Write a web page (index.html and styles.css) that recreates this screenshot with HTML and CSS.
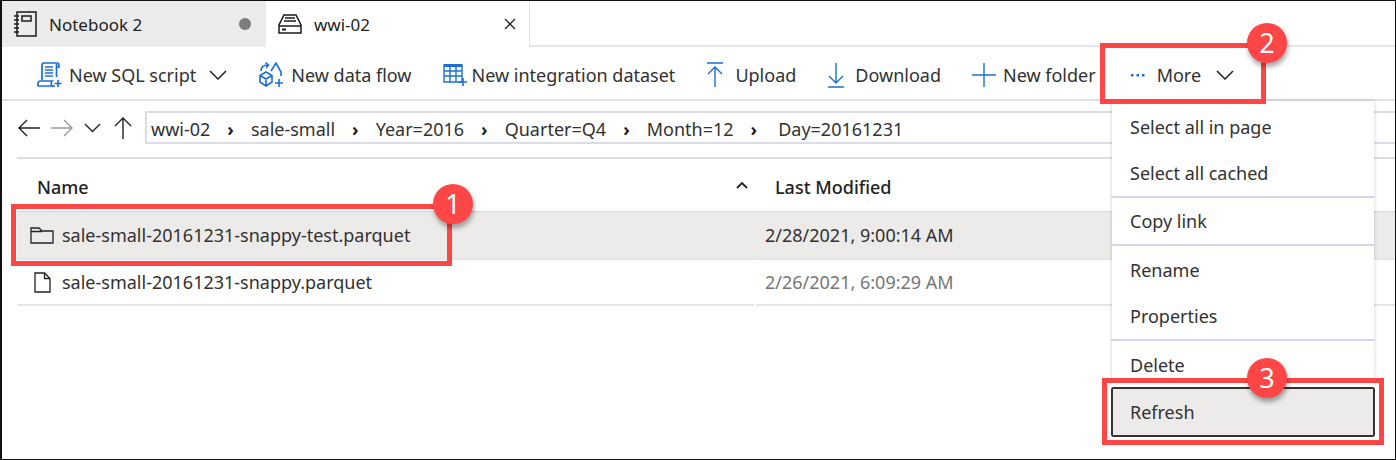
FILE: index.html
```html
<!DOCTYPE html>
<html lang="en">
<head>
  <meta charset="UTF-8" />
  <title>wwi-02</title>
  <link rel="stylesheet" href="styles.css">
</head>
<body>
  <div class="frame">
    <div class="tabs">
      <div class="tab tab-off">
        <svg class="tab-icon" width="24" height="26" viewBox="0 0 24 26" fill="none" stroke="#1b1b1b" stroke-width="1.5">
          <rect x="4" y="1" width="19" height="24"/>
          <rect x="9" y="5" width="9" height="5"/>
          <path d="M1 5h5M1 9h5M1 13h5M1 17h5M1 21h5"/>
        </svg>
        <span class="tab-name">Notebook 2</span>
        <span class="dirty-dot"></span>
      </div>
      <div class="tab tab-on">
        <svg class="tab-icon" width="24" height="20" viewBox="0 0 24 20" fill="none" stroke="#1b1b1b" stroke-width="1.5">
          <path d="M6 1h12l5 10v8H1v-8z"/>
          <path d="M1 12h22M7 4h10M6 7h12"/>
          <path d="M4 15.5h4" stroke-width="2"/>
        </svg>
        <span class="tab-name">wwi-02</span>
        <svg class="tab-close" width="12" height="12" viewBox="0 0 12 12" stroke="#222" stroke-width="1.3"><path d="M1 1l10 10M11 1L1 11"/></svg>
      </div>
      <div class="tab-rest"></div>
    </div>

    <div class="toolbar">
      <div class="tool tool-sql">
        <svg width="26" height="26" viewBox="0 0 26 26" fill="none" stroke="#1a6fd6" stroke-width="1.7">
          <path d="M5 18V2.5C5 1.500 5.800 1 6.500 1H20c1.200 0 2 .8 2 2v2h-2.500"/>
          <path d="M19.500 2v13"/>
          <path d="M8 5h8M8 8h8M8 11h8M8 14h8"/>
          <path d="M1 24c-.5-3 .5-5 2-5h12c-1 1-1 4 0 5z"/>
          <path d="M15 24h3M21 18v7M17.500 21.500h7"/>
        </svg>
        <span>New SQL script</span>
        <svg class="chev" width="18" height="10" viewBox="0 0 18 10" fill="none" stroke="#222" stroke-width="1.5"><path d="M1 1l8 8 8-8"/></svg>
      </div>
      <div class="tool tool-flow">
        <svg width="26" height="26" viewBox="0 0 26 26" fill="none" stroke="#1a6fd6" stroke-width="1.600">
          <path d="M8 10l6 3.500v6.500l-6 4-6-4v-6.500zM2 13.500l6 3.500 6-3.500M8 17v7"/>
          <path d="M3 9c0-4 3-6 7-6M7.500 .5L10.500 3 8 6"/>
          <path d="M13 9l5-8 5 9v4"/>
          <path d="M17 21h8M21 17v8"/>
        </svg>
        <span>New data flow</span>
      </div>
      <div class="tool tool-set">
        <svg width="24" height="24" viewBox="0 0 24 24" fill="none" stroke="#1a6fd6" stroke-width="1.400">
          <path d="M1 2h18v17H1z"/>
          <path d="M1 2.500h18" stroke-width="3"/>
          <path d="M1 8h18M1 13h18M7 3v16M13 3v16"/>
          <path d="M20 15v8M16 19h8" stroke-width="1.600"/>
        </svg>
        <span>New integration dataset</span>
      </div>
      <div class="tool tool-up">
        <svg width="18" height="26" viewBox="0 0 18 26" fill="none" stroke="#1a6fd6" stroke-width="1.400"><path d="M1 1h16M9 25V5M2 12l7-7 7 7"/></svg>
        <span>Upload</span>
      </div>
      <div class="tool tool-down">
        <svg width="18" height="26" viewBox="0 0 18 26" fill="none" stroke="#1a6fd6" stroke-width="1.400"><path d="M1 25h16M9 1v20M2 14l7 7 7-7"/></svg>
        <span>Download</span>
      </div>
      <div class="tool tool-new">
        <svg width="24" height="24" viewBox="0 0 24 24" fill="none" stroke="#1a6fd6" stroke-width="1.400"><path d="M0 12h24M12 0v24"/></svg>
        <span>New folder</span>
      </div>
      <div class="tool tool-more">
        <svg width="14" height="4" viewBox="0 0 14 4" fill="#1a6fd6"><rect y="1" width="2.500" height="2.500"/><rect x="5.500" y="1" width="2.500" height="2.500"/><rect x="11" y="1" width="2.500" height="2.500"/></svg>
        <span>More</span>
        <svg class="chev" width="18" height="10" viewBox="0 0 18 10" fill="none" stroke="#222" stroke-width="1.500"><path d="M1 1l8 8 8-8"/></svg>
      </div>
    </div>

    <div class="pathbar">
      <div class="nav-icons">
        <svg width="22" height="18" viewBox="0 0 22 18" fill="none" stroke="#222" stroke-width="1.400"><path d="M22 9H1M9 1L1 9l8 8"/></svg>
        <svg width="22" height="18" viewBox="0 0 22 18" fill="none" stroke="#999" stroke-width="1.400"><path d="M0 9h21M13 1l8 8-8 8"/></svg>
        <svg width="17" height="10" viewBox="0 0 17 10" fill="none" stroke="#222" stroke-width="1.400"><path d="M1 1l7.500 7.500L16 1"/></svg>
        <svg class="nav-up" width="18" height="22" viewBox="0 0 18 22" fill="none" stroke="#222" stroke-width="1.400"><path d="M9 22V1M1 9l8-8 8 8"/></svg>
      </div>
      <div class="crumbs">
        <span>wwi-02</span><span class="sep">›</span>
        <span>sale-small</span><span class="sep">›</span>
        <span>Year=2016</span><span class="sep">›</span>
        <span>Quarter=Q4</span><span class="sep">›</span>
        <span>Month=12</span><span class="sep sep-last">›</span>
        <span>Day=20161231</span>
      </div>
    </div>

    <div class="grid-head">
      <span class="col-name">Name</span>
      <svg class="sort" width="12" height="7" viewBox="0 0 12 7" fill="none" stroke="#222" stroke-width="1.800"><path d="M1 6l5-5 5 5"/></svg>
      <span class="col-date">Last Modified</span>
    </div>
    <div class="row row-sel">
      <div class="cell-name">
        <svg width="24" height="18" viewBox="0 0 24 18" fill="none" stroke="#222" stroke-width="1.300"><path d="M1 17V2h8l3 3h11v12zM1 5.500h11"/></svg>
        <span>sale-small-20161231-snappy-test.parquet</span>
      </div>
      <div class="cell-date">2/28/2021, 9:00:14 AM</div>
    </div>
    <div class="row">
      <div class="cell-name">
        <svg class="file-icon" width="17" height="21" viewBox="0 0 17 21" fill="none" stroke="#222" stroke-width="1.300"><path d="M1 1h9.500L16 6.500V20H1zM10.500 1v5.500H16"/></svg>
        <span>sale-small-20161231-snappy.parquet</span>
      </div>
      <div class="cell-date cell-muted">2/26/2021, 6:09:29 AM</div>
    </div>

    <div class="menu">
      <div class="menu-item">Select all in page</div>
      <div class="menu-item">Select all cached</div>
      <div class="menu-line"></div>
      <div class="menu-item">Copy link</div>
      <div class="menu-line"></div>
      <div class="menu-item menu-tall">Rename</div>
      <div class="menu-item menu-tall">Properties</div>
      <div class="menu-line"></div>
      <div class="menu-item menu-tall">Delete</div>
      <div class="menu-item menu-focus">Refresh</div>
    </div>

    <div class="callout callout-one"></div>
    <div class="callout callout-two"></div>
    <div class="callout callout-three"></div>
    <div class="badge badge-one">1</div>
    <div class="badge badge-two">2</div>
    <div class="badge badge-three">3</div>
  </div>
</body>
</html>
```

FILE: styles.css
```css
* { box-sizing: border-box; }
body { margin: 0; background: white; }
.frame { position: relative; width: 1396px; height: 460px; overflow: hidden; border: 1px solid #111; border-left-width: 2px; font-family: "Noto Sans", "Open Sans", sans-serif; font-size: 18px; color: #323130; background: white; }

.tabs { display: flex; height: 46px; }
.tab { display: flex; align-items: center; height: 46px; color: #222; font-size: 17px; }
.tab-off { width: 264px; padding-left: 11px; background: #ebebeb; }
.tab-on { width: 264px; padding-left: 12px; border-right: 1px solid #e1e1e6; background: white; }
.tab-rest { flex: 1; border-bottom: 2px solid #e6e6ec; }
.tab-name { margin-left: 12px; }
.dirty-dot { width: 12px; height: 12px; margin-left: auto; margin-right: 15px; border-radius: 50%; background: #7c7c7c; }
.tab-close { margin-left: auto; margin-right: 13px; }

.toolbar { display: flex; align-items: center; height: 54px; padding: 4px 0 0 35px; border-bottom: 2px solid #e0e0e8; }
.tool { display: flex; align-items: center; gap: 6px; }
.tool .chev { margin-left: 7px; }
.tool-flow { margin-left: 31px; gap: 7px; }
.tool-set { margin-left: 31px; gap: 5px; }
.tool-up { margin-left: 31px; gap: 11px; }
.tool-down { margin-left: 31px; gap: 10px; }
.tool-new { margin-left: 31px; gap: 7px; }
.tool-more { margin-left: 35px; gap: 12px; }
.tool-more .chev { margin-left: 3px; }

.pathbar { display: flex; align-items: center; height: 58px; margin-left: 15px; padding: 0 0 3px 1px; border-bottom: 2px solid #dcdce6; }
.nav-icons { display: flex; align-items: center; width: 127px; gap: 11px; }
.nav-up { margin-left: 2px; }
.crumbs { display: flex; align-items: center; flex: 1; height: 33px; padding: 2px 0 0 4px; border: 2px solid #dcdce6; border-right: 0; }
.sep { margin: 0 17px; font-weight: 700; color: #222; }
.sep-last { margin-right: 21px; }

.grid-head { position: relative; display: flex; align-items: center; height: 52px; padding-top: 4px; font-weight: 500; color: #222; }
.col-name { margin-left: 35px; }
.sort { position: absolute; left: 734px; top: 23px; }
.col-date { position: absolute; left: 773px; }

.row { display: grid; grid-template-columns: 737px 1fr; column-gap: 2px; height: 46px; margin-left: 15px; }
.row-sel { height: 49px; border-top: 1px solid #d4d6e2; background: #ecebea; }
.cell-name { display: flex; align-items: center; gap: 8px; padding-left: 13px; border-bottom: 2px solid #e2e5ec; }
.file-icon { margin: 0 3px 0 4px; }
.cell-date { display: flex; align-items: center; padding-left: 9px; border-bottom: 2px solid #e2e5ec; }
.cell-muted { color: #767676; }

.menu { position: absolute; left: 1110px; top: 100px; width: 262px; height: 340px; padding-top: 3px; background: white; box-shadow: 0 0 4px rgba(0, 0, 0, .2); }
.menu-item { display: flex; align-items: center; height: 46px; padding-left: 18px; }
.menu-tall { height: 46.500px; padding-top: 1px; }
.menu-line { height: 2px; margin: 0 -1px; background: #d4d4e4; }
.menu-focus { position: absolute; left: -1px; top: 286px; width: 264px; height: 50px; padding: 0 0 0 17px; border: 2px solid #333; border-radius: 2px; outline: 2px solid white; background: #ecebea; }

.callout { position: absolute; border: 5px solid #ff4646; }
.callout-one { left: 9px; top: 203px; width: 441px; height: 62px; }
.callout-two { left: 1098px; top: 42px; width: 166px; height: 61px; }
.callout-three { left: 1100px; top: 377px; width: 282px; height: 67px; }
.badge { position: absolute; width: 40px; height: 40px; border-radius: 50%; background: #ff4646; color: white; font-size: 27px; line-height: 40px; text-align: center; box-shadow: 1px 4px 5px rgba(0, 0, 0, .35); }
.badge-one { left: 431px; top: 183px; }
.badge-two { left: 1245px; top: 22px; }
.badge-three { left: 1245px; top: 357px; }
```
